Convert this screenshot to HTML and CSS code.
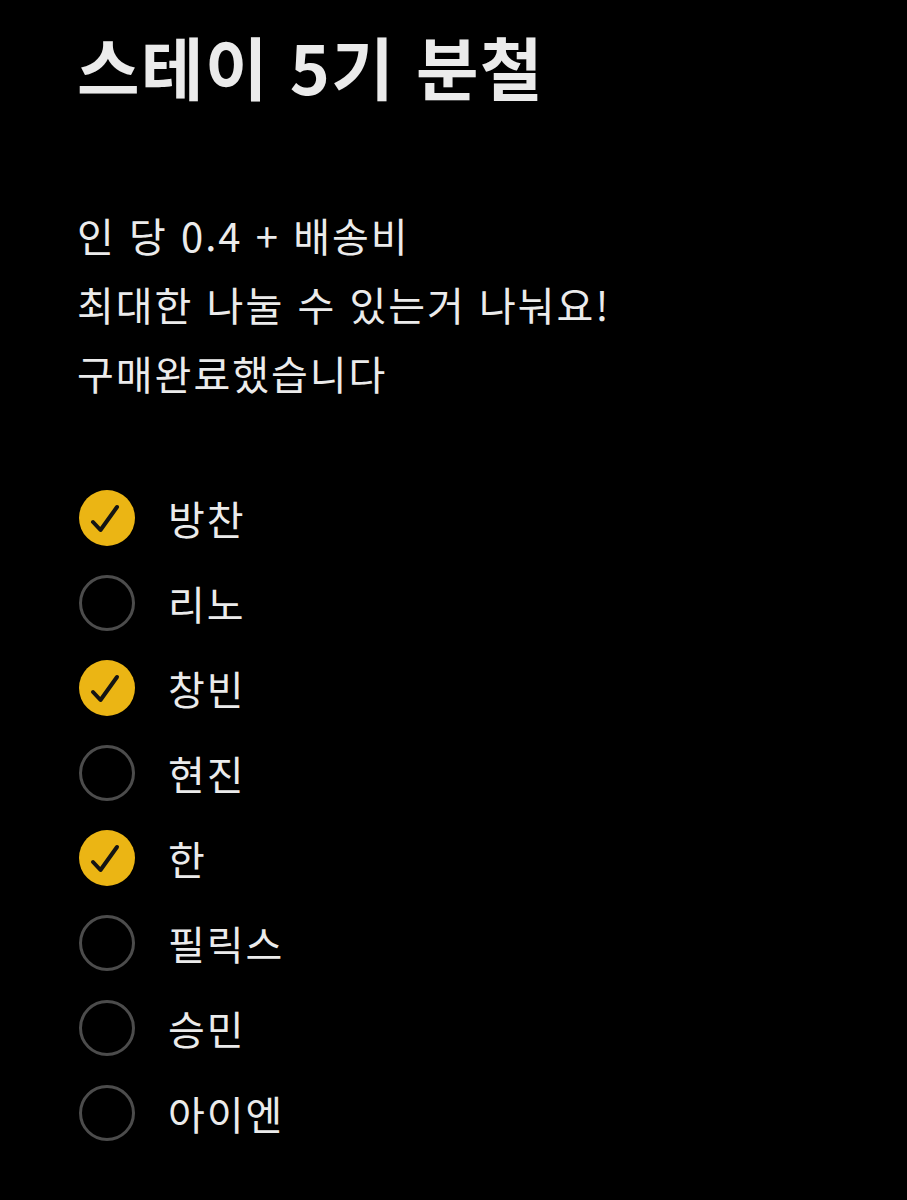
FILE: index.html
```html
<!DOCTYPE html>
<html lang="ko">
<head>
    <meta charset="UTF-8">
    <meta name="viewport" content="width=device-width, initial-scale=1.0">
    <title>스테이 5기 분철</title>
    <link rel="stylesheet" href="styles.css">
</head>
<body>
    <div class="note">
        <h1>스테이 5기 분철</h1>

        <p class="memo">
            인 당 0.4 + 배송비<br>
            최대한 나눌 수 있는거 나눠요!<br>
            구매완료했습니다
        </p>

        <ul class="checklist">
            <li class="item done"><span class="box"><svg viewBox="0 0 56 56"><path d="M14 32 L21.5 40 L38 17"/></svg></span>방찬</li>
            <li class="item"><span class="box"></span>리노</li>
            <li class="item done"><span class="box"><svg viewBox="0 0 56 56"><path d="M14 32 L21.5 40 L38 17"/></svg></span>창빈</li>
            <li class="item"><span class="box"></span>현진</li>
            <li class="item done"><span class="box"><svg viewBox="0 0 56 56"><path d="M14 32 L21.5 40 L38 17"/></svg></span>한</li>
            <li class="item"><span class="box"></span>필릭스</li>
            <li class="item"><span class="box"></span>승민</li>
            <li class="item"><span class="box"></span>아이엔</li>
        </ul>
    </div>
</body>
</html>
```

FILE: styles.css
```css
body {
    margin: 0;
    background-color: #000;
    color: #ebebeb;
    font-family: "Noto Sans CJK KR", "Noto Sans", sans-serif;
}
.note {
    padding: 26px 0 0 77px;
}
h1 {
    margin: 0;
    font-size: 68px;
    font-weight: 700;
    line-height: 80px;
    letter-spacing: 1.5px;
}
.memo {
    margin: 95px 0 0;
    font-size: 40px;
    line-height: 69px;
    letter-spacing: 2px;
}
.checklist {
    list-style: none;
    margin: 67px 0 0;
    padding: 0;
}
.item {
    display: flex;
    align-items: center;
    gap: 33px;
    height: 85px;
    font-size: 40px;
    letter-spacing: 2px;
}
.box {
    width: 56px;
    height: 56px;
    box-sizing: border-box;
    border: 3px solid #4c4c4c;
    border-radius: 50%;
    margin-left: 2px;
    flex-shrink: 0;
}
.done .box {
    border: none;
    background-color: #ebb514;
}
.box svg {
    display: block;
    width: 56px;
    height: 56px;
}
.box path {
    fill: none;
    stroke: #141414;
    stroke-width: 4;
    stroke-linecap: round;
    stroke-linejoin: round;
}
```
